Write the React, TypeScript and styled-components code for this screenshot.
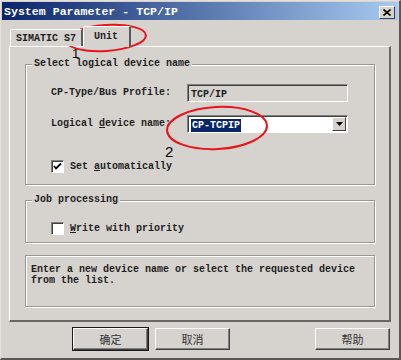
import React, { FC } from 'react';
import styled, { createGlobalStyle } from 'styled-components';

const GlobalStyle = createGlobalStyle`
  html, body {
    margin: 0;
    padding: 0;
    background: #d4d0c8;
  }
  * {
    box-sizing: border-box;
  }
`;

const MONO = `'Liberation Mono', 'Courier New', monospace`;
const CJK = `'Noto Sans CJK SC', 'Noto Sans', sans-serif`;

const Window = styled.div`
  position: relative;
  width: 401px;
  height: 360px;
  background: #d6d3ce;
  border-top: 1px solid #e4e1dc;
  border-left: 1px solid #e4e1dc;
  border-right: 2px solid #5a5856;
  border-bottom: 2px solid #5a5856;
  font-family: ${MONO};
  font-size: 10px;
  font-weight: bold;
  color: #1e1e1e;
  overflow: hidden;
`;

const TitleBar = styled.div`
  height: 18px;
  margin: 1px 1px 0 1px;
  padding: 0 3px 0 2px;
  display: flex;
  align-items: center;
  justify-content: space-between;
  background: linear-gradient(to right, #0a246a, #a6caf0);
`;

const TitleText = styled.span`
  font-size: 11.6px;
  font-weight: bold;
  color: #fff;
  letter-spacing: 0;
`;

const CloseButton = styled.div`
  width: 16px;
  height: 13px;
  margin-top: 2px;
  background: #d6d3ce;
  border-top: 1px solid #fff;
  border-left: 1px solid #fff;
  border-right: 1px solid #404040;
  border-bottom: 1px solid #404040;
  display: flex;
  align-items: center;
  justify-content: center;
`;

const TabRow = styled.div`
  height: 26px;
  padding-left: 9px;
  display: flex;
  align-items: flex-end;
`;

const Tab = styled.div<{ $active?: boolean }>`
  position: relative;
  z-index: ${p => (p.$active ? 2 : 1)};
  height: ${p => (p.$active ? 21 : 17)}px;
  margin-bottom: ${p => (p.$active ? -1 : 0)}px;
  padding: ${p => (p.$active ? '4px 11px 0 10px' : '3px 5px 0 5px')};
  background: #d6d3ce;
  border-top: 1px solid #fff;
  border-left: 1px solid #fff;
  border-right: 2px solid #5a5856;
  border-radius: 2px 2px 0 0;
  font-size: 10px;
`;

const Panel = styled.div`
  height: 276px;
  margin: 0 8px;
  padding: 17px 14px 13px 15px;
  border-top: 1px solid #fff;
  border-left: 1px solid #fff;
  border-right: 2px solid #6a6866;
  border-bottom: 2px solid #6a6866;
  display: flex;
  flex-direction: column;
`;

const Group = styled.div<{ $height: number; $gap?: number }>`
  position: relative;
  height: ${p => p.$height}px;
  margin-bottom: ${p => p.$gap ?? 0}px;
  border: 1px solid #9a9793;
  box-shadow: 1px 1px 0 #fff, inset 1px 1px 0 #fff;
  padding-left: 25px;
`;

const Legend = styled.span`
  position: absolute;
  top: -7px;
  left: 6px;
  padding: 0 2px;
  background: #d6d3ce;
  line-height: 12px;
`;

const FieldGrid = styled.div`
  display: grid;
  grid-template-columns: 136px 161px;
  row-gap: 13px;
  padding-top: 19px;
  align-items: center;
`;

const Label = styled.span`
  line-height: 18px;
`;

const Field = styled.div<{ $white?: boolean }>`
  position: relative;
  height: 18px;
  background: ${p => (p.$white ? '#fff' : '#d6d3ce')};
  border-top: 1px solid #808080;
  border-left: 1px solid #808080;
  border-right: 1px solid #fff;
  border-bottom: 1px solid #fff;
  box-shadow: inset 1px 1px 0 #404040;
  padding: 2px 0 0 3px;
  line-height: 13px;
  display: flex;
  align-items: center;
`;

const Selected = styled.span`
  background: #0a246a;
  color: #fff;
  padding: 0 1px;
  line-height: 13px;
`;

const DropButton = styled.div`
  position: absolute;
  right: 1px;
  top: 1px;
  width: 14px;
  height: 14px;
  background: #d6d3ce;
  border-top: 1px solid #fff;
  border-left: 1px solid #fff;
  border-right: 1px solid #404040;
  border-bottom: 1px solid #404040;
  display: flex;
  align-items: center;
  justify-content: center;
`;

const CheckRow = styled.div<{ $top: number }>`
  display: flex;
  align-items: center;
  gap: 6px;
  margin-top: ${p => p.$top}px;
  height: 13px;
`;

const CheckBox = styled.div`
  width: 13px;
  height: 13px;
  background: #fff;
  border-top: 1px solid #808080;
  border-left: 1px solid #808080;
  border-right: 1px solid #fff;
  border-bottom: 1px solid #fff;
  box-shadow: inset 1px 1px 0 #404040;
  display: flex;
  align-items: center;
  justify-content: center;
`;

const Key = styled.span`
  text-decoration: underline;
`;

const InfoBox = styled.div`
  height: 52px;
  border: 1px solid #9a9793;
  box-shadow: 1px 1px 0 #fff, inset 1px 1px 0 #fff;
  padding: 8px 5px 0 5px;
  line-height: 11px;
`;

const ButtonRow = styled.div`
  height: 36px;
  padding: 6px 9px 0 72px;
  display: flex;
  gap: 7px;
`;

const Button = styled.div<{ $default?: boolean; $right?: boolean }>`
  width: 75px;
  height: 22px;
  margin-left: ${p => (p.$right ? 'auto' : '0')};
  background: #d6d3ce;
  border-top: 1px solid #fff;
  border-left: 1px solid #fff;
  border-right: 1px solid #404040;
  border-bottom: 1px solid #404040;
  box-shadow: ${p =>
    p.$default ? '0 0 0 1px #1a1a1a, inset -1px -1px 0 #808080' : 'inset -1px -1px 0 #808080'};
  font-family: ${CJK};
  font-weight: normal;
  font-size: 11px;
  color: #333;
  display: flex;
  align-items: center;
  justify-content: center;
`;

const Marks = styled.svg`
  position: absolute;
  left: -1px;
  top: -1px;
  pointer-events: none;
`;

const Num = styled.span<{ $x: number; $y: number; $size: number }>`
  position: absolute;
  left: ${p => p.$x}px;
  top: ${p => p.$y}px;
  font-family: 'Liberation Sans', Arial, sans-serif;
  font-weight: normal;
  font-size: ${p => p.$size}px;
  line-height: 1;
  color: #000;
`;

const Check: FC = () => (
  <svg width='9' height='9' viewBox='0 0 9 9'>
    <path d='M1 4 L3 6.5 L8 1.5' fill='none' stroke='#000' strokeWidth='1.8' />
  </svg>
);

const App: FC = () => {
  return (
    <>
      <GlobalStyle />
      <Window>
        <TitleBar>
          <TitleText>System Parameter - TCP/IP</TitleText>
          <CloseButton>
            <svg width='8' height='7' viewBox='0 0 8 7'>
              <path d='M0.5 0.5 L7.5 6.5 M7.5 0.5 L0.5 6.5' stroke='#000' strokeWidth='1.6' />
            </svg>
          </CloseButton>
        </TitleBar>
        <TabRow>
          <Tab>SIMATIC S7</Tab>
          <Tab $active>Unit</Tab>
        </TabRow>
        <Panel>
          <Group $height={121} $gap={15}>
            <Legend>Select logical device name</Legend>
            <FieldGrid>
              <Label>CP-Type/Bus Profile:</Label>
              <Field>TCP/IP</Field>
              <Label>
                Logical <Key>d</Key>evice name:
              </Label>
              <Field $white>
                <Selected>CP-TCPIP</Selected>
                <DropButton>
                  <svg width='7' height='4' viewBox='0 0 7 4'>
                    <path d='M0 0 H7 L3.5 4 Z' fill='#000' />
                  </svg>
                </DropButton>
              </Field>
            </FieldGrid>
            <CheckRow $top={27}>
              <CheckBox>
                <Check />
              </CheckBox>
              <span>
                Set <Key>a</Key>utomatically
              </span>
            </CheckRow>
          </Group>
          <Group $height={43} $gap={12}>
            <Legend>Job processing</Legend>
            <CheckRow $top={21}>
              <CheckBox />
              <span>
                <Key>W</Key>rite with priority
              </span>
            </CheckRow>
          </Group>
          <InfoBox>
            Enter a new device name or select the requested device
            <br />
            from the list.
          </InfoBox>
        </Panel>
        <ButtonRow>
          <Button $default>确定</Button>
          <Button>取消</Button>
          <Button $right>帮助</Button>
        </ButtonRow>

        <Marks width='401' height='360'>
          <ellipse cx='106' cy='38' rx='40' ry='13' transform='rotate(-4 106 38)' fill='none' stroke='#e8141c' strokeWidth='2' />
          <ellipse cx='217' cy='128' rx='50' ry='21' transform='rotate(-3 217 128)' fill='none' stroke='#e8141c' strokeWidth='2' />
        </Marks>
        <Num $x={71} $y={46} $size={13}>1</Num>
        <Num $x={164} $y={143} $size={15}>2</Num>
      </Window>
    </>
  );
};

export default App;
